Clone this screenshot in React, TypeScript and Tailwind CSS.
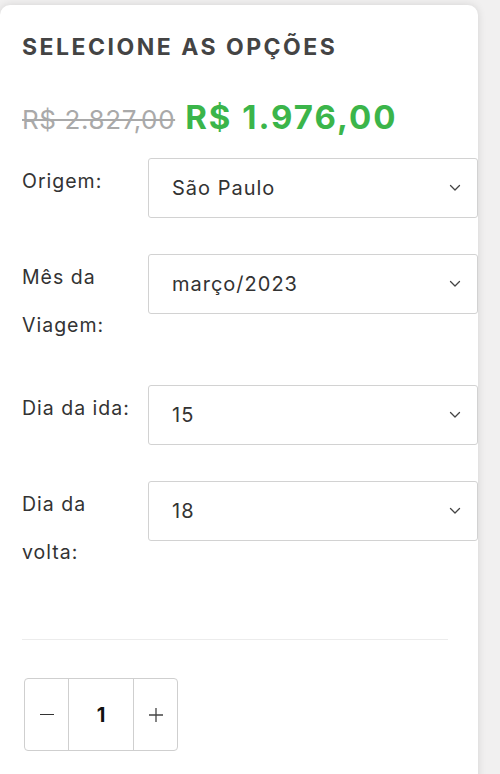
import React from 'react';

type Row = {
  label: string[];
  value: string;
};

const rows: Row[] = [
  { label: ['Origem:'], value: 'São Paulo' },
  { label: ['Mês da', 'Viagem:'], value: 'março/2023' },
  { label: ['Dia da ida:'], value: '15' },
  { label: ['Dia da', 'volta:'], value: '18' },
];

const Chevron = () => (
  <svg width="12" height="8" viewBox="0 0 12 8" fill="none" className="shrink-0">
    <path d="M1.5 1.5L6 6L10.5 1.5" stroke="#444" strokeWidth="1.3" strokeLinecap="round" strokeLinejoin="round" />
  </svg>
);

const SelectRow = ({ row }: { row: Row }) => (
  <div className="flex items-start">
    <div className="w-[126px] shrink-0 text-[19.5px] leading-[47.5px] tracking-[1px] text-[#333]">
      {row.label.map((l) => (
        <div key={l}>{l}</div>
      ))}
    </div>
    <div className="flex-1 h-[60px] flex items-center justify-between pl-[23px] pr-[16px] border border-[#d2d2d2] rounded-[3px] bg-white text-[20px] tracking-[1px] text-[#333]">
      <span>{row.value}</span>
      <Chevron />
    </div>
  </div>
);

export default function App() {
  return (
    <div className="h-[774px] w-[500px] overflow-hidden bg-[#f1f0f0] pt-[5px]" style={{ fontFamily: 'Inter, "Open Sans", sans-serif' }}>
      <div className="w-[478px] min-h-[820px] bg-white rounded-[10px] shadow-[0_0_8px_rgba(0,0,0,0.12)] overflow-hidden pt-[28px] pl-[22px]">
        <h2 className="text-[23px] leading-[28px] font-bold text-[#444] tracking-[2.5px] whitespace-nowrap">SELECIONE AS OPÇÕES</h2>

        <div className="mt-[36px] h-[40px] leading-[40px] whitespace-nowrap">
          <span className="text-[26px] text-[#a9a9a9] line-through tracking-[0.6px]">R$ 2.827,00</span>
          <span className="ml-[10px] text-[33px] font-bold text-[#3bb54a] tracking-[2px]">R$ 1.976,00</span>
        </div>

        <div className="mt-[21px] flex flex-col gap-[36px]">
          {rows.map((r) => (
            <SelectRow key={r.value} row={r} />
          ))}
        </div>

        <div className="mt-[63px] mr-[30px] h-px bg-[#ececec]" />

        <div className="mt-[38px] ml-[2px] flex w-[154px] h-[73px] border border-[#cfcfcf] rounded-[4px]">
          <div className="w-[44px] flex items-center justify-center border-r border-[#cfcfcf]">
            <span className="block w-[14px] h-[1.5px] bg-[#333]" />
          </div>
          <div className="w-[65px] flex items-center justify-center border-r border-[#cfcfcf] text-[20px] font-bold text-[#111]">
            1
          </div>
          <div className="flex-1 flex items-center justify-center">
            <svg width="14" height="14" viewBox="0 0 14 14">
              <path d="M7 0V14M0 7H14" stroke="#444" strokeWidth="1.3" />
            </svg>
          </div>
        </div>
      </div>
    </div>
  );
}
